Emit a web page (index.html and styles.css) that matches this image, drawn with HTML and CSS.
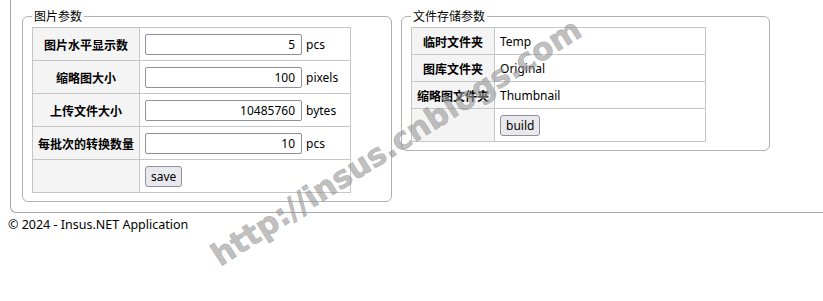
FILE: index.html
```html
<!DOCTYPE html>
<html lang="zh-CN">
<head>
<meta charset="utf-8">
<title>图片参数</title>
<link rel="stylesheet" href="styles.css">
</head>
<body>
<div class="outer">
  <fieldset class="box box-left">
    <legend>图片参数</legend>
    <table class="grid">
      <tr>
        <th>图片水平显示数</th>
        <td class="val"><input class="num" type="text" value="5"><span class="unit">pcs</span></td>
      </tr>
      <tr>
        <th>缩略图大小</th>
        <td class="val"><input class="num" type="text" value="100"><span class="unit">pixels</span></td>
      </tr>
      <tr>
        <th>上传文件大小</th>
        <td class="val"><input class="num" type="text" value="10485760"><span class="unit">bytes</span></td>
      </tr>
      <tr>
        <th>每批次的转换数量</th>
        <td class="val"><input class="num" type="text" value="10"><span class="unit">pcs</span></td>
      </tr>
      <tr>
        <th></th>
        <td class="val"><button class="btn" type="button">save</button></td>
      </tr>
    </table>
  </fieldset>
  <fieldset class="box box-right">
    <legend>文件存储参数</legend>
    <table class="grid grid-store">
      <tr class="text-row">
        <th>临时文件夹</th>
        <td class="val">Temp</td>
      </tr>
      <tr class="text-row">
        <th>图库文件夹</th>
        <td class="val">Original</td>
      </tr>
      <tr class="text-row">
        <th>缩略图文件夹</th>
        <td class="val">Thumbnail</td>
      </tr>
      <tr>
        <th></th>
        <td class="val"><button class="btn" type="button">build</button></td>
      </tr>
    </table>
  </fieldset>
</div>
<footer class="footer">© 2024 - Insus.NET Application</footer>
<div class="watermark">http://insus.cnblogs.com</div>
</body>
</html>
```
FILE: styles.css
```css
html, body {
  margin: 0;
  padding: 0;
  overflow: hidden;
  background: #fff;
}

body {
  font-family: "Noto Sans", "Noto Sans CJK SC", sans-serif;
  font-size: 12px;
  color: #000;
  position: relative;
  width: 823px;
  height: 301px;
}

.outer {
  margin-left: 10px;
  width: 900px;
  border-left: 1px solid #a8a8a8;
  border-bottom: 1px solid #a8a8a8;
  border-bottom-left-radius: 6px;
  padding: 6px 0 10px 11px;
  display: flex;
  align-items: flex-start;
  gap: 9px;
  box-sizing: border-box;
}

.box {
  margin: 0;
  min-width: 0;
  border: 1px solid #b0b0b0;
  border-radius: 6px;
  padding: 1px 9px 8px;
  box-sizing: border-box;
}

.box-left {
  width: 370px;
}

.box-right {
  width: 369px;
}

.box legend {
  padding: 0 2px;
  line-height: 20px;
  font-size: 12px;
  font-family: "Noto Sans CJK SC", sans-serif;
}

.grid {
  border-collapse: collapse;
}

.grid th,
.grid td {
  border: 1px solid #c6c6c6;
  vertical-align: middle;
  height: 33px;
  box-sizing: border-box;
}

.grid th {
  background: #f4f4f4;
  font-family: "Noto Sans CJK SC", sans-serif;
  font-weight: 700;
  font-size: 12px;
  text-align: center;
  padding: 0 5px;
  white-space: nowrap;
}

.grid td.val {
  width: 211px;
  padding: 0 5px;
  text-align: left;
  white-space: nowrap;
}

.grid-store .text-row th,
.grid-store .text-row td {
  height: 27px;
}

.num {
  width: 157px;
  height: 21px;
  box-sizing: border-box;
  border: 1px solid #8f8f9d;
  border-radius: 2px;
  padding: 0 6px;
  margin: 0;
  text-align: right;
  font-family: "Noto Sans", sans-serif;
  font-size: 12px;
  color: #000;
  vertical-align: middle;
}

.unit {
  margin-left: 4px;
  vertical-align: middle;
}

.btn {
  height: 21px;
  box-sizing: border-box;
  padding: 0 5px;
  margin: 0;
  border: 1px solid #8f8f9d;
  border-radius: 3px;
  background: #e9e9ed;
  font-family: "Noto Sans", sans-serif;
  font-size: 12px;
  color: #000;
  vertical-align: middle;
}

.footer {
  margin: 3px 0 0 8px;
  font-size: 12.5px;
  line-height: 18px;
}

.watermark {
  position: absolute;
  left: 220px;
  top: 241px;
  font-family: "DejaVu Sans", sans-serif;
  font-weight: 700;
  font-size: 31px;
  line-height: 31px;
  color: rgba(150, 150, 150, 0.6);
  -webkit-text-stroke: 0.6px rgba(150, 150, 150, 0.6);
  white-space: nowrap;
  transform-origin: 0 26px;
  transform: rotate(-32.5deg);
  pointer-events: none;
}
```
